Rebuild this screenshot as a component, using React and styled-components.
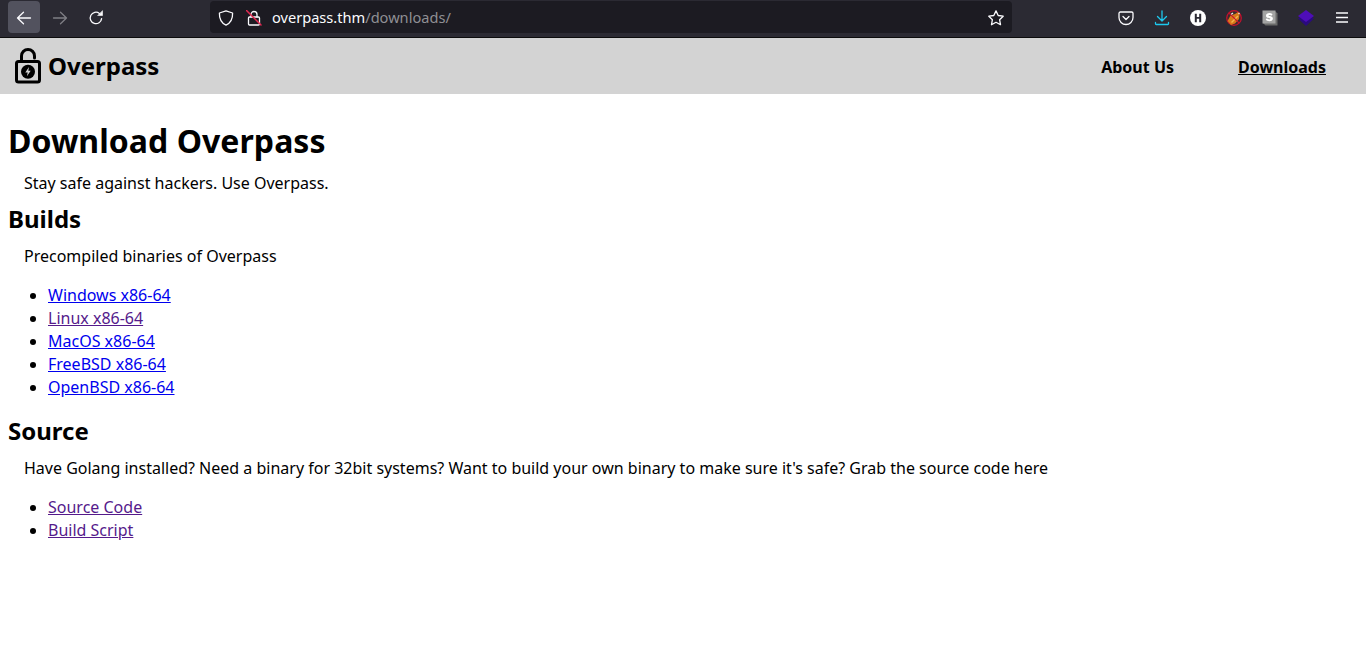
import React from 'react'
import styled, { createGlobalStyle } from 'styled-components'

const GlobalStyle = createGlobalStyle`
  html, body {
    margin: 0;
    padding: 0;
    background: #fff;
    color: #000;
    font-family: "Noto Sans", "Open Sans", sans-serif;
    font-size: 16px;
    line-height: 23px;
  }
`

const Toolbar = styled.div`
  display: flex;
  align-items: center;
  height: 38px;
  padding: 0 8px 3px;
  box-sizing: border-box;
  background: #2b2a33;
  border-bottom: 1px solid #0c0c0d;
`

const ButtonGroup = styled.div`
  display: flex;
  gap: 4px;
  margin-left: ${(p) => (p.$end ? 'auto' : '0')};
`

const ToolButton = styled.div`
  width: 32px;
  height: 32px;
  padding-top: 1px;
  box-sizing: border-box;
  border-radius: 4px;
  display: flex;
  align-items: center;
  justify-content: center;
  background: ${(p) => (p.$active ? '#52525e' : 'transparent')};
`

const UrlBar = styled.div`
  display: flex;
  align-items: center;
  width: 802px;
  height: 32px;
  margin-left: 98px;
  padding: 1px 8px 0;
  box-sizing: border-box;
  background: #1c1b22;
  border-radius: 4px;
`

const UrlIcon = styled.span`
  display: flex;
  width: 16px;
  height: 16px;
  margin-right: ${(p) => p.$gap || 0}px;
`

const UrlText = styled.div`
  flex: 1;
  margin-top: -1px;
  font-size: 14.6px;
  color: #fbfbfe;
  white-space: nowrap;
`

const UrlPath = styled.span`
  color: #8f8f94;
`

const Nav = styled.nav`
  display: flex;
  align-items: center;
  justify-content: space-between;
  height: 56px;
  padding: 0 8px 0 14px;
  background: #d3d3d3;
`

const Brand = styled.div`
  display: flex;
  align-items: center;
  gap: 6px;
  margin-top: -1px;
  font-size: 24px;
  line-height: 33px;
  font-weight: 700;
`

const NavLinks = styled.div`
  display: flex;
  padding-top: 2px;
`

const NavLink = styled.a`
  padding: 0 32px;
  font-size: 16px;
  font-weight: 700;
  color: #000;
  text-decoration: ${(p) => (p.$current ? 'underline' : 'none')};
`

const Main = styled.main`
  padding: 0 8px;
`

const Title = styled.h1`
  margin: 25px 0 9px;
  font-size: 32px;
  line-height: 44px;
  letter-spacing: 0.05px;
  font-weight: 700;
`

const Section = styled.h2`
  margin: 7px 0 10px;
  font-size: 24px;
  line-height: 33px;
  font-weight: 700;
`

const Lead = styled.p`
  margin: 0;
  padding-left: 16px;
`

const Links = styled.ul`
  margin: 16px 0 15px;
  padding-left: 40px;
`

const Link = styled.a`
  color: ${(p) => (p.$visited ? '#551a8b' : '#0000ee')};
  text-decoration: underline;
`

const iconProps = {
  fill: 'none',
  stroke: '#fbfbfe',
  strokeWidth: 1.3,
  strokeLinecap: 'round',
  strokeLinejoin: 'round',
}

const Back = ({ dim }) => (
  <svg width="16" height="16" viewBox="0 0 16 16" {...iconProps} opacity={dim ? 0.4 : 1} transform={dim ? 'scale(-1 1)' : undefined}>
    <path d="M1.500 8h13M7.500 2.200 1.500 8l6 5.800" />
  </svg>
)

const Reload = () => (
  <svg width="16" height="16" viewBox="0 0 16 16" {...iconProps}>
    <path d="M13.600 8.600A5.700 5.700 0 1 1 11.400 3.400" />
    <path d="M14.500 1v4.500H10z" fill="#fbfbfe" strokeWidth="0.6" />
  </svg>
)

const Shield = () => (
  <svg width="16" height="16" viewBox="0 0 16 16" {...iconProps}>
    <path d="M8 .9 14.600 3c.2 6.200-1.900 10-6.600 12.100C3.300 13 1.200 9.200 1.400 3z" />
  </svg>
)

const BrokenLock = () => (
  <svg width="16" height="16" viewBox="0 0 16 16" {...iconProps}>
    <path d="M5 7V4.500a3 3 0 0 1 6 0V7" />
    <rect x="2.500" y="7" width="11" height="8" rx="1" />
    <path d="M.5 .5l14.500 14.500" stroke="#e22850" strokeWidth="1.500" />
  </svg>
)

const Star = () => (
  <svg width="16" height="16" viewBox="0 0 16 16" {...iconProps}>
    <path d="M8 .9l2.200 4.600 5 .7-3.600 3.500.9 5L8 12.300l-4.500 2.400.9-5L.8 6.200l5-.7z" />
  </svg>
)

const Pocket = () => (
  <svg width="16" height="16" viewBox="0 0 16 16" {...iconProps}>
    <path d="M2.300 2h11.400c.7 0 1.300.6 1.300 1.300V7.500a7 7 0 0 1-14 0V3.300C1 2.600 1.600 2 2.300 2z" />
    <path d="M5 6.500l3 3 3-3" />
  </svg>
)

const Download = () => (
  <svg width="16" height="16" viewBox="0 0 16 16" fill="none" stroke="#1cc8ee" strokeWidth="1.300" strokeLinecap="round" strokeLinejoin="round">
    <path d="M8 .8v10M3.500 6.500 8 11l4.500-4.500M1.500 12.500v1.300c0 .4.300.7.700.7h11.600c.4 0 .7-.3.7-.7v-1.300" />
  </svg>
)

const HBadge = () => (
  <svg width="16" height="16" viewBox="0 0 16 16">
    <circle cx="8" cy="8" r="8" fill="#fff" />
    <path d="M4.800 3.800h2v3.200h2.400V3.800h2v8.400h-2V8.800H6.800v3.400h-2z" fill="#2b2a33" />
  </svg>
)

const BlockedFox = () => (
  <svg width="16" height="16" viewBox="0 0 16 16">
    <circle cx="8" cy="8" r="7.300" fill="#3d2b2e" stroke="#c8102e" strokeWidth="1.200" />
    <path d="M1.500 11 4.500 5.500 9 4l3-2 1.500 2.500L13 9l-4 4.500-4 1.500z" fill="#d9771a" />
    <path d="M5 12 11.500 5.500l1 1L6 13z" fill="#f2b64d" />
    <path d="M5 4.500 7 3M12.500 3l1 1" stroke="#f4f0ea" strokeWidth="1.200" />
    <path d="M2.800 2.800l10.400 10.400" stroke="#c8102e" strokeWidth="1.200" />
  </svg>
)

const SCube = () => (
  <svg width="16" height="16" viewBox="0 0 16 16">
    <path d="M1.500 1.500h12l2 2V15.500H3.500l-2-2z" fill="#6a6a6a" />
    <rect x="0.500" y="0.500" width="13" height="13" fill="#a3a3a3" />
    <path d="M10.600 4.300C9.900 3.500 8.800 3 7.500 3 5.400 3 4 4 4 5.700c0 2.900 4.400 1.800 4.400 3 0 .4-.4.700-1.200.7-.9 0-1.700-.4-2.400-1.100L3.700 9.800c.8.900 2 1.400 3.600 1.400 2.200 0 3.600-1 3.600-2.700 0-3-4.400-1.900-4.400-3 0-.4.400-.6 1-.6.700 0 1.300.3 1.900.9z" fill="#fff" />
  </svg>
)

const Layers = () => (
  <svg width="16" height="16" viewBox="0 0 16 16">
    <path d="M0 8.500 8 4l8 4.500L8 16z" fill="#2a0a80" />
    <path d="M0 6 8 0l8 6-8 6z" fill="#4e0db8" />
  </svg>
)

const Menu = () => (
  <svg width="16" height="16" viewBox="0 0 16 16" stroke="#fbfbfe" strokeWidth="1.300">
    <path d="M2 3h12M2 7.500h12M2 12h12" />
  </svg>
)

const LogoLock = () => (
  <svg width="28" height="36" viewBox="0 0 28 36" fill="none" stroke="#000">
    <path d="M7.500 13V8a6.500 6.500 0 0 1 13 0v2" strokeWidth="3" strokeLinecap="round" />
    <rect x="2.500" y="13.500" width="23" height="20.500" rx="2" strokeWidth="3" />
    <circle cx="14" cy="23.700" r="7" fill="#000" stroke="none" />
    <path d="M15 19 11.300 24.500h2.400l-.8 3.700 3.800-5.400h-2.400z" fill="#d3d3d3" stroke="none" />
  </svg>
)

const builds = [
  { name: 'Windows x86-64' },
  { name: 'Linux x86-64', visited: true },
  { name: 'MacOS x86-64' },
  { name: 'FreeBSD x86-64' },
  { name: 'OpenBSD x86-64' },
]

const sources = [
  { name: 'Source Code', visited: true },
  { name: 'Build Script', visited: true },
]

const extensions = [Pocket, Download, HBadge, BlockedFox, SCube, Layers, Menu]

const LinkList = ({ items }) => (
  <Links>
    {items.map((item) => (
      <li key={item.name}>
        <Link href="#" $visited={item.visited}>{item.name}</Link>
      </li>
    ))}
  </Links>
)

export default function App() {
  return (
    <>
      <GlobalStyle />
      <Toolbar>
        <ButtonGroup>
          <ToolButton $active><Back /></ToolButton>
          <ToolButton><Back dim /></ToolButton>
          <ToolButton><Reload /></ToolButton>
        </ButtonGroup>
        <UrlBar>
          <UrlIcon $gap={12}><Shield /></UrlIcon>
          <UrlIcon $gap={10}><BrokenLock /></UrlIcon>
          <UrlText>overpass.thm<UrlPath>/downloads/</UrlPath></UrlText>
          <UrlIcon><Star /></UrlIcon>
        </UrlBar>
        <ButtonGroup $end>
          {extensions.map((Icon, i) => (
            <ToolButton key={i}><Icon /></ToolButton>
          ))}
        </ButtonGroup>
      </Toolbar>
      <Nav>
        <Brand><LogoLock />Overpass</Brand>
        <NavLinks>
          <NavLink href="#">About Us</NavLink>
          <NavLink href="#" $current>Downloads</NavLink>
        </NavLinks>
      </Nav>
      <Main>
        <Title>Download Overpass</Title>
        <Lead>Stay safe against hackers. Use Overpass.</Lead>
        <Section>Builds</Section>
        <Lead>Precompiled binaries of Overpass</Lead>
        <LinkList items={builds} />
        <Section>Source</Section>
        <Lead>Have Golang installed? Need a binary for 32bit systems? Want to build your own binary to make sure it's safe? Grab the source code here</Lead>
        <LinkList items={sources} />
      </Main>
    </>
  )
}
